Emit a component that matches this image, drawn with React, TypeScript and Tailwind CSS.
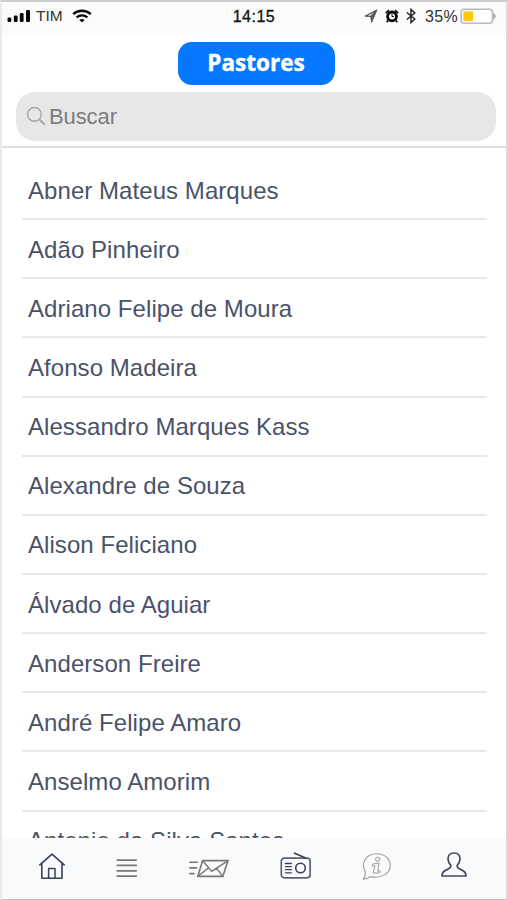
import type { ReactNode } from "react";

const pastores = [
  "Abner Mateus Marques",
  "Adão Pinheiro",
  "Adriano Felipe de Moura",
  "Afonso Madeira",
  "Alessandro Marques Kass",
  "Alexandre de Souza",
  "Alison Feliciano",
  "Álvado de Aguiar",
  "Anderson Freire",
  "André Felipe Amaro",
  "Anselmo Amorim",
  "Antonio da Silva Santos",
];

const StatusBar = () => {
  return (
    <div className="flex h-[34px] shrink-0 items-start justify-between bg-[#fbfbfb] pl-[5px] pr-[9px] pt-[3px] text-black">
      <div className="flex h-[22px] w-[183px] items-center">
        <svg width="24" height="14" viewBox="0 0 24 14" fill="#080808">
          <rect x="0.5" y="8.5" width="3.8" height="4.5" rx="1.2" />
          <rect x="6.8" y="6.5" width="3.8" height="6.5" rx="1.2" />
          <rect x="12.8" y="4" width="3.8" height="9" rx="1.2" />
          <rect x="19" y="1" width="4" height="12" rx="1.2" />
        </svg>
        <span className="ml-[5px] text-[15.5px] text-[#333]">TIM</span>
        <svg
          className="ml-[9px]"
          width="20"
          height="14"
          viewBox="0 0 20 14"
          fill="none"
          stroke="#080808"
          strokeWidth="2.3"
        >
          <path d="M1.2 5.2C6.3 0.6 13.7 0.6 18.8 5.2" />
          <path d="M4.6 8.4C7.7 5.6 12.3 5.6 15.4 8.4" />
          <path d="M10 13.6L7.4 11C8.9 9.6 11.1 9.6 12.6 11Z" fill="#080808" stroke="none" />
        </svg>
      </div>
      <span className="mt-[2px] text-[16px] leading-5 tracking-[0.5px] text-[#111] [-webkit-text-stroke:0.3px_#111]">
        14:15
      </span>
      <div className="flex h-[22px] w-[179px] items-center justify-end">
        <svg width="14" height="14" viewBox="0 0 14 14" fill="none" stroke="#555" strokeWidth="1.2">
          <path d="M1 7.2L12.4 1.4L7.8 12.4L6.9 7.3Z" />
          <path d="M7 7.2L12.4 1.4L7.9 11.6Z" fill="#666" />
        </svg>
        <svg className="ml-[7px]" width="14" height="14" viewBox="0 0 14 14" fill="none">
          <circle cx="7" cy="7.4" r="4.4" stroke="#080808" strokeWidth="2.8" />
          <path d="M7 5V7.6L9 7.3" stroke="#080808" strokeWidth="1" />
          <path d="M0.8 4L4 1.1M13.2 4L10 1.1M3 11.5L1.8 13.2M11 11.5L12.2 13.2" stroke="#080808" strokeWidth="1.7" />
        </svg>
        <svg className="ml-[7px]" width="10" height="16" viewBox="0 0 10 16" fill="none" stroke="#222" strokeWidth="1.4">
          <path d="M0.8 4.5L8.8 11L5 14.6V1.4L8.8 5L0.8 11.5" />
        </svg>
        <span className="ml-[9px] mt-[2px] text-[16px] tracking-[0.3px] text-[#333]">35%</span>
        <svg className="ml-[2px]" width="37" height="17" viewBox="0 0 37 17">
          <rect x="1.2" y="1.2" width="31.3" height="14" rx="3" fill="#fff" stroke="#b9b9b9" strokeWidth="1.6" />
          <rect x="3.4" y="3.4" width="9.6" height="9.6" fill="#fcc705" />
          <path d="M33 4.2L36.5 8.2L33 12.2Z" fill="#b5b5b5" />
        </svg>
      </div>
    </div>
  );
};

const TabIcon = ({
  className,
  width,
  children,
}: {
  className: string;
  width: number;
  children: ReactNode;
}) => {
  return (
    <svg
      className={className}
      width={width}
      height="32"
      viewBox={`0 0 ${width} 32`}
      fill="none"
      strokeLinejoin="round"
      strokeLinecap="round"
    >
      {children}
    </svg>
  );
};

const TabBar = () => {
  return (
    <nav className="flex h-[61px] shrink-0 items-start bg-[#f9fafb] pt-[12px]">
      {/* home */}
      <TabIcon className="ml-[36px] stroke-[#35415f]" width={28}>
        <path d="M1.8 14.8L14 4.2L26.2 14.8" strokeWidth="1.6" />
        <path d="M3.8 13.5V28.2H24V13.5" strokeWidth="1.6" />
        <path d="M10.6 28V18.6H17V28" strokeWidth="1.5" />
      </TabIcon>
      {/* list */}
      <TabIcon className="ml-[50px] stroke-[#777]" width={22}>
        <path
          d="M1.2 10.1H20.2M1.2 15.4H20.2M1.2 20.8H20.2M1.2 26.2H20.2"
          strokeWidth="1.7"
        />
      </TabIcon>
      {/* mail */}
      <TabIcon className="ml-[50px] stroke-[#777]" width={42}>
        <path d="M14.6 10.6H40L34.8 26.4H9.8Z" strokeWidth="1.6" />
        <path d="M14.8 10.8L23.6 21.4L39.8 10.8M10 26.2L20.6 17.9M34.6 26.2L28.8 18.4" strokeWidth="1.4" />
        <path d="M1.8 12.3H9.5M1.8 17.9H8.5M1.8 23.6H6" strokeWidth="1.6" />
      </TabIcon>
      {/* radio */}
      <TabIcon className="ml-[50px] stroke-[#35415f]" width={32}>
        <rect x="1.3" y="8.2" width="28.8" height="19.6" rx="3" stroke="#5b6275" strokeWidth="1.7" />
        <path d="M14.6 3.2L25.6 8" strokeWidth="1.8" />
        <circle cx="20.5" cy="18" r="4.8" strokeWidth="1.6" />
        <path d="M5.4 13.5H11.4M5.4 16.6H11.4M5.4 19.7H11.4M5.4 22.8H11.4" strokeWidth="1.3" />
      </TabIcon>
      {/* info */}
      <TabIcon className="ml-[50px] stroke-[#9b9b9b]" width={30}>
        <path
          d="M3.2 21.4C-1.4 13.6 3.4 3.8 14.8 3.8C22.6 3.8 28.2 9 28.2 15.4C28.2 23.4 19.4 29 8.6 26.6C6.6 28.2 4 29.1 1.2 29.2C3 27.2 3.6 24.2 3.2 21.4Z"
          strokeWidth="1.1"
        />
        <circle cx="15.6" cy="9.2" r="2.1" strokeWidth="1" />
        <path
          d="M11 14L17.2 13L15.6 21H18.2L17.2 23H11.2L13 15.7L10.6 16Z"
          strokeWidth="1"
        />
      </TabIcon>
      {/* profile */}
      <TabIcon className="ml-[48px] stroke-[#3d4863]" width={28}>
        <path
          d="M14 3C9.8 3 7.7 5.5 8 9.2C8.2 11.8 9 13.6 10.8 15.4C11.2 17.6 10 18.4 7 19.6C3.4 20.9 2 22.7 2 26H26C26 22.7 24.6 20.9 21 19.6C18 18.4 16.8 17.6 17.2 15.4C19 13.6 19.8 11.8 20 9.2C20.3 5.5 18.2 3 14 3Z"
          strokeWidth="1.7"
        />
      </TabIcon>
    </nav>
  );
};

const App = () => {
  return (
    <div className="flex h-[900px] w-[508px] flex-col overflow-hidden border-x-2 border-t-2 border-b-[1px] border-b-[#c4c4c4] border-l-[#eaeaea] border-r-[#dadada] border-t-[#cccccc] bg-white font-['Liberation_Sans',sans-serif]">
      <StatusBar />

      <header className="flex h-[112px] shrink-0 flex-col items-center border-b-2 border-[#dedede] pt-[6px]">
        <h1 className="ml-[4px] flex h-[43px] w-[157px] items-center justify-center rounded-[14px] bg-[#0478ff] pb-[2px] font-['Open_Sans',sans-serif] text-[22.5px] font-bold text-white [-webkit-text-stroke:0.4px_white]">
          Pastores
        </h1>
        <div className="ml-[4px] mt-[7px] flex h-[49px] w-[480px] items-center rounded-[19px] bg-[#e7e7e7] pl-[10px]">
          <svg width="21" height="21" viewBox="0 0 21 21" fill="none" stroke="#a5a5a5">
            <circle cx="8.4" cy="8.4" r="6.9" strokeWidth="1.4" />
            <path d="M13.4 13.4L18.8 18.8" strokeWidth="2" />
          </svg>
          <span className="ml-[2px] text-[22px] tracking-[-0.1px] text-[#7c7c7c]">Buscar</span>
        </div>
      </header>

      {/* the last row runs under the tab bar */}
      <ul className="min-h-0 flex-1 overflow-hidden pl-[20px] pr-[19px] pt-[13px]">
        {pastores.map((nome) => (
          <li
            key={nome}
            className="flex h-[59.15px] items-center border-b-2 border-[#e8e8e8] pl-[6px] pt-[2px] text-[24px] tracking-[0.06px] text-[#4a5269]"
          >
            {nome}
          </li>
        ))}
      </ul>

      <TabBar />
    </div>
  );
};

export default App;
